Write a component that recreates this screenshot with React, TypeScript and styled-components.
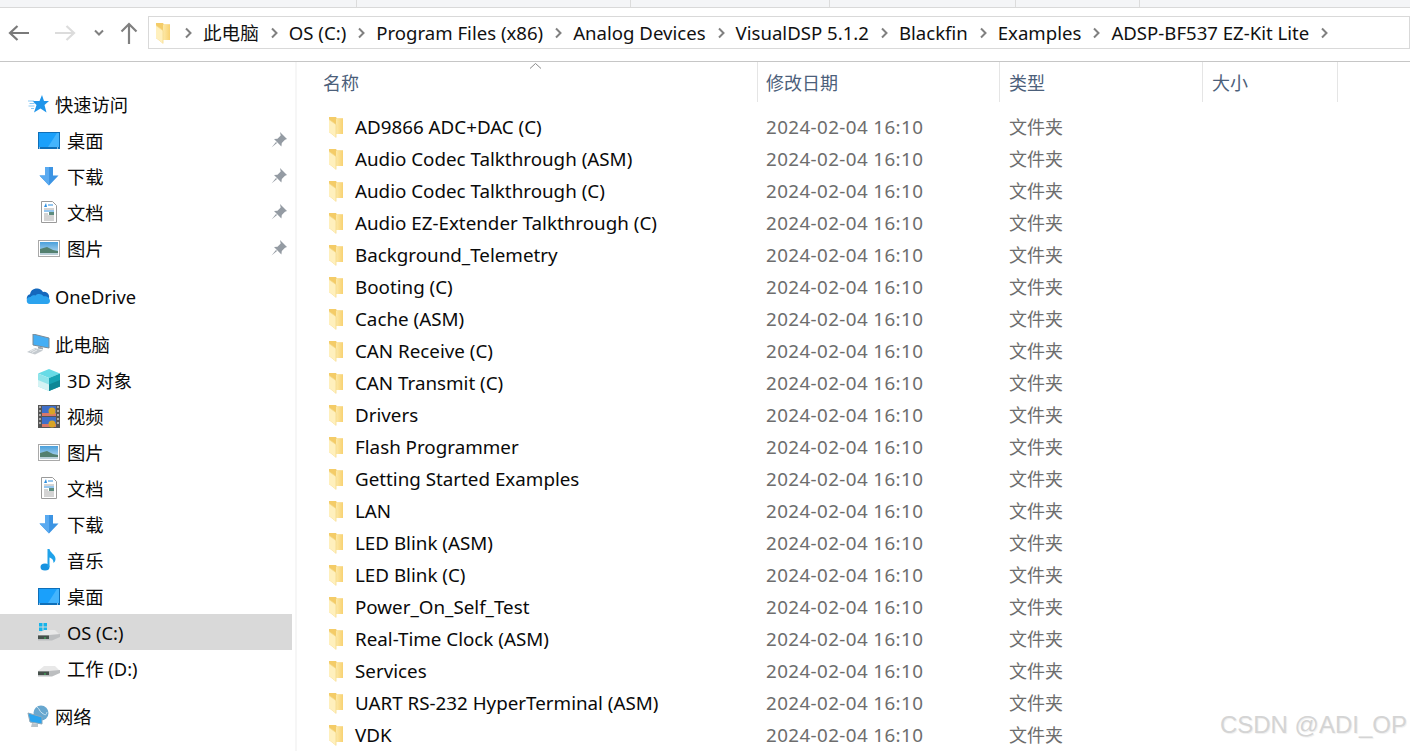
import React from 'react';
import styled, {createGlobalStyle} from 'styled-components';

const Global = createGlobalStyle`
  html, body {
    margin: 0;
    padding: 0;
    background: white;
  }
  * {
    box-sizing: border-box;
  }
`;

const Window = styled.div`
  position: relative;
  width: 1410px;
  height: 751px;
  overflow: hidden;
  background: white;
  color: #0a0a0a;
  font-family: "Noto Sans", "Noto Sans CJK SC", sans-serif;
  font-size: 18px;
`;

const RibbonEdge = styled.div`
  height: 8px;
  background: #f4f5f7;
  border-bottom: 1px solid #d9d9d9;
  display: flex;
  padding-left: 356px;
`;

const RibbonTab = styled.i<{$width: number}>`
  width: ${p => p.$width}px;
  height: 7px;
  border-left: 1px solid #dcdcdc;
`;

const NavBar = styled.div`
  height: 54px;
  border-bottom: 1px solid #c6c6c6;
  display: flex;
  align-items: center;
  padding: 0 0 4px 8px;
`;

const NavButton = styled.div<{$width: number}>`
  width: ${p => p.$width}px;
  height: 24px;
  display: flex;
  align-items: center;
`;

const AddressBar = styled.div`
  margin-left: 6px;
  width: 1262px;
  height: 33px;
  border: 1px solid #d9d9d9;
  display: flex;
  align-items: center;
  padding-left: 6px;
  white-space: nowrap;
  color: #111;
`;

const AddressFolder = styled.span`
  width: 15px;
  margin-right: 14px;
  display: flex;
  height: 22px;
`;

const Crumb = styled.span`
  padding: 0 11px 0 10px;
  line-height: 31px;
  font-size: 18.600px;
`;

const Body = styled.div`
  height: 689px;
  display: flex;
`;

const Sidebar = styled.nav`
  width: 297px;
  flex: none;
  border-right: 2px solid #f6f6f6;
  padding-top: 24px;
`;

const SideGroup = styled.div`
  margin-bottom: 12px;
`;

const SideRow = styled.div<{$child?: boolean; $selected?: boolean}>`
  height: 36px;
  width: 292px;
  display: flex;
  align-items: center;
  padding-left: ${p => (p.$child ? 38 : 26)}px;
  background: ${p => (p.$selected ? '#d9d9d9' : 'transparent')};
  white-space: nowrap;
`;

const IconSlot = styled.span<{$child?: boolean}>`
  flex: none;
  width: ${p => (p.$child ? 22 : 24)}px;
  margin-right: ${p => (p.$child ? 7 : 5)}px;
  display: flex;
  justify-content: center;
`;

const SideLabel = styled.span`
  flex: 1;
  font-size: 18.300px;
`;

const PinSlot = styled.span`
  width: 19px;
  margin-right: 3px;
  display: flex;
`;

const Content = styled.main`
  flex: 1;
  min-width: 0;
`;

const HeaderRow = styled.div`
  position: relative;
  height: 40px;
  display: flex;
  color: #4c607a;
  margin-bottom: 9px;
`;

const HeaderCell = styled.div<{$width: number; $pad: number}>`
  width: ${p => p.$width}px;
  height: 40px;
  line-height: 43px;
  padding-left: ${p => p.$pad}px;
  border-right: 1px solid #e5e5e5;
`;

const SortCaret = styled.svg`
  position: absolute;
  left: 232px;
  top: 0;
`;

const FileRow = styled.div`
  height: 32px;
  display: flex;
  align-items: center;
  white-space: nowrap;
`;

const NameCell = styled.div`
  width: 469px;
  padding-left: 31px;
  display: flex;
  align-items: center;
  gap: 12px;
  font-size: 18.800px;
`;

const DateCell = styled.div`
  width: 243px;
  color: #6d6d6d;
  font-size: 18.800px;
  letter-spacing: .4px;
`;

const TypeCell = styled.div`
  color: #6d6d6d;
  padding-bottom: 2px;
`;

const Watermark = styled.div`
  position: absolute;
  right: 3px;
  bottom: 13px;
  font-family: "Liberation Sans", sans-serif;
  font-size: 24px;
  line-height: 26px;
  color: #d4d4d4;
  text-shadow: 1px 1px 1px #efefef;
`;

const files = [
  'AD9866 ADC+DAC (C)',
  'Audio Codec Talkthrough (ASM)',
  'Audio Codec Talkthrough (C)',
  'Audio EZ-Extender Talkthrough (C)',
  'Background_Telemetry',
  'Booting (C)',
  'Cache (ASM)',
  'CAN Receive (C)',
  'CAN Transmit (C)',
  'Drivers',
  'Flash Programmer',
  'Getting Started Examples',
  'LAN',
  'LED Blink (ASM)',
  'LED Blink (C)',
  'Power_On_Self_Test',
  'Real-Time Clock (ASM)',
  'Services',
  'UART RS-232 HyperTerminal (ASM)',
  'VDK',
];

const crumbs = ['此电脑', 'OS (C:)', 'Program Files (x86)', 'Analog Devices', 'VisualDSP 5.1.2', 'Blackfin', 'Examples', 'ADSP-BF537 EZ-Kit Lite'];

const Folder = () => (
  <svg width="15" height="22" viewBox="0 0 15 22">
    <defs>
      <linearGradient id="fold" x1="0" x2="1" y1="0" y2="0">
        <stop offset="0" stopColor="#fde9a8" />
        <stop offset="1" stopColor="#f8d272" />
      </linearGradient>
    </defs>
    <path d="M1 1h7l1 1.500h6V18H8V21.500L1 16z" fill="#f4cc68" />
    <path d="M8 2.500h7V18H8z" fill="url(#fold)" />
    <path d="M1 3.500l7 5V21.500L1 16z" fill="#fff0bd" />
    <path d="M1 3.500l7 5V21.500" fill="none" stroke="#f4d98a" strokeWidth=".8" />
  </svg>
);

const Chevron = () => (
  <svg width="9" height="12" viewBox="0 0 9 12">
    <path d="M2 1.500L6.500 6 2 10.500" fill="none" stroke="#808080" strokeWidth="2" />
  </svg>
);

const Pin = () => (
  <svg width="18" height="18" viewBox="0 0 18 18">
    <path d="M10 1l7 7-2 .8-3.200 3.200-.4 3.500-7.400-7.400 3.500-.4L10.700 4.500z" fill="#949ba3" />
    <path d="M6 11L1.500 16.500 7 12z" fill="#949ba3" />
  </svg>
);

const Star = () => (
  <svg width="22" height="18" viewBox="0 0 22 18">
    <path d="M15 0l2 6h5l-4.500 4 2 7.500-6-4-6.500 4 2.500-7.500-4-4h7z" fill="#1f95ea" />
    <path d="M1 6h6M2.500 8.500h5M1.500 11h6M4 13.500h3" stroke="#8ac9f4" strokeWidth="1" />
  </svg>
);

const Desktop = () => (
  <svg width="22" height="17" viewBox="0 0 22 17">
    <rect width="22" height="17" fill="#0f6fb8" />
    <rect x="1" y="1" width="20" height="14" fill="#1aa0fb" />
    <path d="M10 15L19 1h2v14z" fill="#44b4fd" />
    <path d="M1 16h1M19 16h1" stroke="white" />
  </svg>
);

const Download = () => (
  <svg width="22" height="20" viewBox="0 0 22 20">
    <path d="M7 1h8v8.500h5.500L11 19.500 1.500 9.500H7z" fill="#3c94e3" />
    <path d="M7 1h4v18.500L1.500 9.500H7z" fill="#5aaaf0" />
  </svg>
);

const Doc = () => (
  <svg width="22" height="22" viewBox="0 0 22 22">
    <path d="M3.500 .5h11l4 4v17h-15z" fill="white" stroke="#9a9a9a" />
    <path d="M6 8h10M6 13h4M6 15h10M6 17h10M6 19h10" stroke="#a8a8a8" />
    <path d="M6 6l2-4 1 4z" fill="#2e8fdf" />
    <path d="M10 4h5M6 10h10" stroke="#2e8fdf" />
    <rect x="11" y="11" width="5" height="3" fill="#5f8d7f" />
  </svg>
);

const Picture = () => (
  <svg width="22" height="17" viewBox="0 0 22 17">
    <defs>
      <linearGradient id="sky" x1="0" x2="0" y1="0" y2="1">
        <stop offset="0" stopColor="#4aa0dc" />
        <stop offset="1" stopColor="#c5e0f0" />
      </linearGradient>
    </defs>
    <rect x=".5" y=".5" width="21" height="16" fill="white" stroke="#a9a9a9" />
    <rect x="2" y="2" width="18" height="13" fill="url(#sky)" />
    <path d="M2 9l7-2 6 3 5 1v4H2z" fill="#53806f" />
    <path d="M2 13h18v2H2z" fill="#b9cfd8" />
  </svg>
);

const Cloud = () => (
  <svg width="24" height="16" viewBox="0 0 24 16">
    <path d="M5 15a4.500 4.500 0 0 1-1-8.800 7 7 0 0 1 13-2.200 5 5 0 0 1 6 6l-3 5z" fill="#1468bd" />
    <path d="M4 16a3.500 3.500 0 0 1 .5-7c1-1.500 3-2 5-1.500 2-2 6-2 8 .8 3.500-.5 6.500 1.700 6.500 4.700 0 2-1.500 3-3 3z" fill="#2ba3ee" />
  </svg>
);

const Computer = () => (
  <svg width="24" height="21" viewBox="0 0 24 21">
    <path d="M7 0l16 4v10L7 11z" fill="#45aef4" stroke="#7b8a94" />
    <path d="M12 12.500l5 1v2l-5-1z" fill="#9aa5ad" />
    <path d="M1 18l8-4 8 2.500-8 4z" fill="#c4cacf" />
    <path d="M4 17.500l5-2.500M6 18.500l5-2.500" stroke="#e9ecee" />
  </svg>
);

const Cube = () => (
  <svg width="22" height="22" viewBox="0 0 22 22">
    <path d="M11 0l11 4.500L11 9 0 4.500z" fill="#67dbe6" />
    <path d="M0 4.500L11 9v13L0 17.500z" fill="#8fe4ea" />
    <path d="M22 4.500L11 9v13l11-4.500z" fill="#16a3b3" />
    <path d="M0 11l11 4.500V22L0 17.500z" fill="#d5f3f4" />
    <path d="M22 11l-11 4.500V22l11-4.500z" fill="#0d8796" />
  </svg>
);

const Film = () => (
  <svg width="22" height="23" viewBox="0 0 22 23">
    <rect width="22" height="23" fill="#555" />
    <rect x="4" y="1" width="14" height="10" fill="#3f6fc9" />
    <rect x="4" y="12" width="14" height="10" fill="#3f6fc9" />
    <rect x="4" y="8" width="14" height="3" fill="#d9786a" />
    <rect x="4" y="19" width="14" height="3" fill="#d9786a" />
    <circle cx="14" cy="6" r="3.500" fill="#d8a528" />
    <circle cx="14" cy="19" r="3.500" fill="#d8a528" />
    <path d="M1.500 2h1M1.500 6h1M1.500 10h1M1.500 14h1M1.500 18h1M19.500 2h1M19.500 6h1M19.500 10h1M19.500 14h1M19.500 18h1" stroke="white" strokeWidth="2" />
  </svg>
);

const Music = () => (
  <svg width="22" height="22" viewBox="0 0 22 22">
    <ellipse cx="7" cy="18" rx="4.500" ry="3.500" fill="#1692e0" />
    <path d="M9.500 18V0h2c.5 4 6 5 6 10 0 2-1 3-2 4 .3-3-2-5-4-5.500V18z" fill="#1fa2ea" />
  </svg>
);

const Drive: React.FC<{windows?: boolean}> = ({windows}) => (
  <svg width="22" height="18" viewBox="0 0 22 18">
    {windows && <path d="M1 0h3.500v3.500H1zM5.500 0H9v3.500H5.500zM1 4.500h3.500V8H1zM5.500 4.500H9V8H5.500z" fill="#16b4ea" />}
    <path d="M0 12l6-5h11l5 5-7 2H0z" fill="#e8e8e8" />
    <path d="M0 12h11l11-1v3l-8 3.500H0z" fill="#bcbec0" />
    <path d="M0 12.500h11V16H0z" fill="#46504b" />
    <path d="M6 15h2" stroke="#3fbf5f" />
  </svg>
);

const Network = () => (
  <svg width="22" height="22" viewBox="0 0 22 22">
    <circle cx="14" cy="8" r="7.500" fill="#68a7cf" />
    <path d="M10 2c3 2 2 4 5 6s4 3 5-1" fill="none" stroke="#c8e2f0" />
    <path d="M1 8l14 4v7L3 17z" fill="#2aa4ef" stroke="#8fa8b8" />
    <path d="M5 18l6 1v3H4z" fill="#b9c3ca" />
  </svg>
);

const sideGroups = [
  {
    head: {icon: <Star />, label: '快速访问'},
    items: [
      {icon: <Desktop />, label: '桌面', pin: true},
      {icon: <Download />, label: '下载', pin: true},
      {icon: <Doc />, label: '文档', pin: true},
      {icon: <Picture />, label: '图片', pin: true},
    ],
  },
  {head: {icon: <Cloud />, label: 'OneDrive'}, items: []},
  {
    head: {icon: <Computer />, label: '此电脑'},
    items: [
      {icon: <Cube />, label: '3D 对象'},
      {icon: <Film />, label: '视频'},
      {icon: <Picture />, label: '图片'},
      {icon: <Doc />, label: '文档'},
      {icon: <Download />, label: '下载'},
      {icon: <Music />, label: '音乐'},
      {icon: <Desktop />, label: '桌面'},
      {icon: <Drive windows />, label: 'OS (C:)', selected: true},
      {icon: <Drive />, label: '工作 (D:)'},
    ],
  },
  {head: {icon: <Network />, label: '网络'}, items: []},
];

const App: React.FC = () => (
  <Window>
    <Global />
    <RibbonEdge>
      <RibbonTab $width={274} />
      <RibbonTab $width={199} />
      <RibbonTab $width={186} />
      <RibbonTab $width={124} />
      <RibbonTab $width={100} />
    </RibbonEdge>
    <NavBar>
      <NavButton $width={46}>
        <svg width="22" height="18" viewBox="0 0 22 18">
          <path d="M21 9H2M9.500 2L2 9l7.500 7" fill="none" stroke="#7a7a7a" strokeWidth="2.200" />
        </svg>
      </NavButton>
      <NavButton $width={39}>
        <svg width="22" height="18" viewBox="0 0 22 18">
          <path d="M1 9h19M12.500 2L20 9l-7.500 7" fill="none" stroke="#dcdcdc" strokeWidth="2.200" />
        </svg>
      </NavButton>
      <NavButton $width={27}>
        <svg width="12" height="8" viewBox="0 0 12 8">
          <path d="M2 1.500L6 5.500 10 1.500" fill="none" stroke="#808080" strokeWidth="2" />
        </svg>
      </NavButton>
      <NavButton $width={22}>
        <svg width="18" height="22" viewBox="0 0 18 22">
          <path d="M9 22V2M1.500 9.500L9 2l7.500 7.500" fill="none" stroke="#808080" strokeWidth="2.200" />
        </svg>
      </NavButton>
      <AddressBar>
        <AddressFolder>
          <Folder />
        </AddressFolder>
        {crumbs.map(c => (
          <React.Fragment key={c}>
            <Chevron />
            <Crumb>{c}</Crumb>
          </React.Fragment>
        ))}
        <Chevron />
      </AddressBar>
    </NavBar>
    <Body>
      <Sidebar>
        {sideGroups.map(group => (
          <SideGroup key={group.head.label}>
            <SideRow>
              <IconSlot>{group.head.icon}</IconSlot>
              <SideLabel>{group.head.label}</SideLabel>
            </SideRow>
            {group.items.map(item => (
              <SideRow key={item.label} $child $selected={'selected' in item && item.selected}>
                <IconSlot $child>{item.icon}</IconSlot>
                <SideLabel>{item.label}</SideLabel>
                {'pin' in item && item.pin && (
                  <PinSlot>
                    <Pin />
                  </PinSlot>
                )}
              </SideRow>
            ))}
          </SideGroup>
        ))}
      </Sidebar>
      <Content>
        <HeaderRow>
          <HeaderCell $width={461} $pad={26}>名称</HeaderCell>
          <HeaderCell $width={242} $pad={8}>修改日期</HeaderCell>
          <HeaderCell $width={203} $pad={9}>类型</HeaderCell>
          <HeaderCell $width={135} $pad={9}>大小</HeaderCell>
          <SortCaret width="13" height="8" viewBox="0 0 13 8">
            <path d="M1 6.500L6.500 1.500 12 6.500" fill="none" stroke="#8a8a8a" strokeWidth="1" />
          </SortCaret>
        </HeaderRow>
        {files.map(name => (
          <FileRow key={name}>
            <NameCell>
              <Folder />
              <span>{name}</span>
            </NameCell>
            <DateCell>2024-02-04 16:10</DateCell>
            <TypeCell>文件夹</TypeCell>
          </FileRow>
        ))}
      </Content>
    </Body>
    <Watermark>CSDN @ADI_OP</Watermark>
  </Window>
);

export default App;
